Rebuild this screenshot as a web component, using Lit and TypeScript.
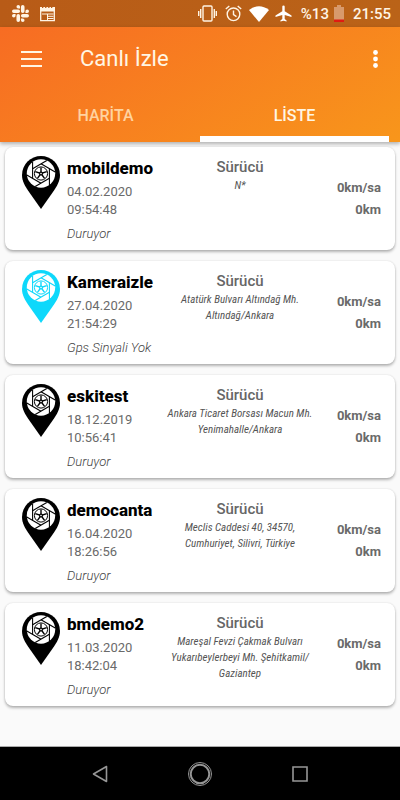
import { LitElement, html, css, svg } from "lit";
import { customElement, property, state } from "lit/decorators.js";
import { classMap } from "lit/directives/class-map.js";

interface Vehicle {
  name: string;
  date: string;
  time: string;
  status: string;
  address: string;
  speed: string;
  distance: string;
  online?: boolean;
}

const vehicles: Vehicle[] = [
  { name: "mobildemo", date: "04.02.2020", time: "09:54:48", status: "Duruyor", address: "N*", speed: "0km/sa", distance: "0km" },
  { name: "Kameraizle", date: "27.04.2020", time: "21:54:29", status: "Gps Sinyali Yok", address: "Atatürk Bulvarı Altındağ Mh. Altındağ/Ankara", speed: "0km/sa", distance: "0km", online: true },
  { name: "eskitest", date: "18.12.2019", time: "10:56:41", status: "Duruyor", address: "Ankara Ticaret Borsası Macun Mh. Yenimahalle/Ankara", speed: "0km/sa", distance: "0km" },
  { name: "democanta", date: "16.04.2020", time: "18:26:56", status: "Duruyor", address: "Meclis Caddesi 40, 34570, Cumhuriyet, Silivri, Türkiye", speed: "0km/sa", distance: "0km" },
  { name: "bmdemo2", date: "11.03.2020", time: "18:42:04", status: "Duruyor", address: "Mareşal Fevzi Çakmak Bulvarı Yukarıbeylerbeyi Mh. Şehitkamil/ Gaziantep", speed: "0km/sa", distance: "0km" },
];

const quarters = [0, 90, 180, 270];
const sixths = [0, 60, 120, 180, 240, 300];
const fifths = [0, 72, 144, 216, 288];

@customElement("status-bar")
class StatusBar extends LitElement {
  static styles = css`
    :host { display: flex; align-items: center; height: 27px; padding: 0 9px 0 12px; color: #fff4e4;
      background: linear-gradient(100deg, #b85b17, #ba6318); font: 500 15px/20px Roboto, sans-serif; }
    svg { display: block; flex: none; }
    .news { margin-left: 10px; }
    .right { display: flex; align-items: center; margin-left: auto; }
    .clock { margin-left: 8px; }
    .wifi { margin-left: 7px; }
    .plane { margin-left: 6px; }
    .percent { margin-left: 9px; }
    .battery { margin-left: 5px; }
    .time { margin-left: 9px; }
  `;
  render() {
    return html`
      <svg width="17" height="17" viewBox="0 0 24 24" fill="currentColor" aria-hidden="true">
        ${quarters.map(a => svg`<path transform="rotate(${a} 12 12)" d="M5.042 15.165a2.528 2.528 0 0 1-2.520 2.523A2.528 2.528 0 0 1 0 15.165a2.527 2.527 0 0 1 2.522-2.520h2.520zM6.313 15.165a2.527 2.527 0 0 1 2.521-2.520 2.527 2.527 0 0 1 2.521 2.520v6.313A2.528 2.528 0 0 1 8.834 24a2.528 2.528 0 0 1-2.521-2.522z"/>`)}
      </svg>
      <svg class="news" width="17" height="16" viewBox="0 0 17 16" aria-hidden="true">
        <path d="M1.700 3v11.600h13.600V3" fill="none" stroke="currentColor" stroke-width="1.300"/>
        <path d="M1 1h2v1h1.300V1h1.800v1h1.300V1h1.800v1h1.300V1H12v1h1.300V1H16v4.600H1z" fill="currentColor"/>
        <path d="M3 8h11.500M9 10.300h5.500M9 12.500h5.500M8.500 8v6" fill="none" stroke="currentColor" stroke-width="1"/>
      </svg>
      <div class="right">
        <svg width="19" height="17" viewBox="0 0 19 17" fill="none" stroke="currentColor" stroke-width="1.400" aria-hidden="true">
          <rect x="5" y="1" width="9" height="15" rx="1"/><path d="M2.700 4v9M16.300 4v9M.7 6v5M18.300 6v5"/>
        </svg>
        <svg class="clock" width="17" height="17" viewBox="0 0 17 17" fill="none" stroke="currentColor" stroke-width="1.400" aria-hidden="true">
          <circle cx="8.500" cy="9.300" r="6.300"/><path d="M8.500 5.500v4.200l3 2M.8 4l3.500-3M16.200 4l-3.500-3"/>
        </svg>
        <svg class="wifi" width="20" height="16" viewBox="0 0 20 16" fill="#fff" aria-hidden="true"><path d="M0 4Q10-3.500 20 4L10 16Z"/></svg>
        <svg class="plane" width="17" height="17" viewBox="0 0 17 17" fill="#fff" aria-hidden="true">
          <path d="M7.300 1.600a1.200 1.200 0 0 1 2.400 0v4.600l6.800 4.200v1.700l-6.800-2v3.900l1.900 1.400v1.200l-3.100-.9-3.100.9v-1.200L7.300 14v-3.900l-6.800 2v-1.700l6.800-4.200z"/>
        </svg>
        <span class="percent">%13</span>
        <svg class="battery" width="10" height="17" viewBox="0 0 10 17" aria-hidden="true">
          <path d="M3 0h4v2h3v15H0V2h3z" fill="#d89a6c"/><path d="M0 14.500h10V17H0z" fill="#e01b12"/>
        </svg>
        <span class="time">21:55</span>
      </div>`;
  }
}

@customElement("vehicle-pin")
class VehiclePin extends LitElement {
  @property({ type: Boolean, reflect: true }) online = false;
  static styles = css`
    :host { display: block; color: #000; }
    :host([online]) { color: #0ed8fb; }
    svg { display: block; }
  `;
  render() {
    return html`<svg width="38" height="53" viewBox="0 0 38 53" aria-hidden="true">
      <path d="M19 0A19 19 0 0 0 0 19C0 25 3 30 6 34.500L19 53 32 34.500C35 30 38 25 38 19A19 19 0 0 0 19 0Z" fill="currentColor"/>
      <circle cx="19" cy="17.500" r="14.200" fill="#fff"/>
      <g fill="none" stroke="currentColor">
        ${sixths.map(a => svg`<path d="M19 7.800L33.200 16" stroke-width="1.100" transform="rotate(${a} 19 17.500)"/>`)}
        <circle cx="19" cy="17.500" r="6.600" stroke-width="1"/>
        ${fifths.map(a => svg`<path d="M19 17.500V11.500" stroke-width="1.400" transform="rotate(${a} 19 17.500)"/>`)}
      </g>
      <circle cx="19" cy="17.500" r="2" fill="currentColor"/>
      <circle cx="19" cy="17.500" r=".8" fill="#fff"/>
    </svg>`;
  }
}

@customElement("vehicle-card")
class VehicleCard extends LitElement {
  @property({ attribute: false }) vehicle!: Vehicle;
  static styles = css`
    :host { display: block; }
    .card { box-sizing: border-box; min-height: 103px; padding: 9px 14px 7px 17px; border-radius: 8px; background: #fff;
      box-shadow: 0 2px 3px rgba(0, 0, 0, .28), 0 0 2px rgba(0, 0, 0, .12);
      display: grid; grid-template-columns: 38px 90px 152px 1fr; column-gap: 7px; font-family: Roboto, sans-serif; color: #6a6a6a; }
    h2, p { margin: 0; }
    .info { white-space: nowrap; }
    .name { color: #000; font-size: 17px; line-height: 24px; font-weight: 800; }
    .date { margin-top: 3px; font-size: 13px; line-height: 18px; }
    .status { margin-top: 6px; font-size: 13px; line-height: 18px; font-style: italic; font-weight: 300; color: #444; }
    .driver { text-align: center; }
    .role { font-size: 15px; line-height: 22px; font-weight: 500; color: #666; }
    .address { font: italic 400 11px/16px "Roboto Condensed", Roboto, sans-serif; color: #555; }
    .figures { padding-top: 21px; text-align: right; font-size: 13px; line-height: 22px; font-weight: 700; white-space: nowrap; }
  `;
  render() {
    const v = this.vehicle;
    return html`<article class="card">
      <vehicle-pin ?online=${v.online}></vehicle-pin>
      <div class="info">
        <h2 class="name">${v.name}</h2>
        <p class="date">${v.date}<br>${v.time}</p>
        <p class="status">${v.status}</p>
      </div>
      <div class="driver">
        <p class="role">Sürücü</p>
        <p class="address">${v.address}</p>
      </div>
      <div class="figures"><p>${v.speed}</p><p>${v.distance}</p></div>
    </article>`;
  }
}

@customElement("app-root")
class AppRoot extends LitElement {
  @state() tab = 1;
  static styles = css`
    :host { display: flex; flex-direction: column; min-height: 100vh; background: #fafafa; font-family: Roboto, sans-serif; }
    button { border: 0; padding: 0; background: none; font: inherit; color: inherit; cursor: pointer; }
    svg { display: block; }
    header { color: #fff6e4; background: linear-gradient(150deg, #f76c23, #f8961b); box-shadow: 0 2px 4px rgba(0, 0, 0, .3); }
    .toolbar { display: flex; align-items: center; height: 63px; padding: 0 16px; }
    .title { flex: 1; margin: 0 0 0 33px; font-size: 22px; line-height: 32px; font-weight: 400; }
    .icon { display: grid; place-items: center; width: 31px; height: 40px; }
    .more { width: 17px; }
    .tabs { display: flex; padding: 0 11px; }
    .tab { flex: 1; height: 52px; padding-top: 6px; box-sizing: border-box; border-bottom: 6px solid transparent;
      font-size: 16px; line-height: 20px; font-weight: 500; color: #ffd3a0; }
    .tab.active { color: #fff6e4; border-bottom-color: #fff; }
    .list { flex: 1; display: flex; flex-direction: column; gap: 11px; list-style: none; margin: 0; padding: 5px 5px 11px; }
    .nav { display: flex; justify-content: center; gap: 60px; align-items: center; height: 53px; background: #000;
      box-shadow: 0 -1px 0 #aaa; }
    .nav button { display: grid; place-items: center; width: 40px; height: 40px; }
  `;
  render() {
    return html`
      <status-bar></status-bar>
      <header>
        <div class="toolbar">
          <button class="icon" aria-label="Menü"><svg width="21" height="16" viewBox="0 0 21 16" fill="currentColor"><path d="M0 0h21v2H0zM0 7h21v2H0zM0 14h21v2H0z"/></svg></button>
          <h1 class="title">Canlı İzle</h1>
          <button class="icon more" aria-label="Diğer"><svg width="5" height="18" viewBox="0 0 5 18" fill="#fff"><circle cx="2.500" cy="2.500" r="2.400"/><circle cx="2.500" cy="9" r="2.400"/><circle cx="2.500" cy="15.500" r="2.400"/></svg></button>
        </div>
        <div class="tabs" role="tablist">
          ${["HARİTA", "LİSTE"].map((t, i) => html`<button role="tab" aria-selected=${this.tab === i}
            class=${classMap({ tab: true, active: this.tab === i })} @click=${() => (this.tab = i)}>${t}</button>`)}
        </div>
      </header>
      <ul class="list">
        ${vehicles.map(v => html`<li><vehicle-card .vehicle=${v}></vehicle-card></li>`)}
      </ul>
      <nav class="nav">
        <button aria-label="Geri"><svg width="16" height="18" viewBox="0 0 16 18" fill="none" stroke="#969696" stroke-width="1.600" stroke-linejoin="round"><path d="M14.500 1.500v15L1.500 9z"/></svg></button>
        <button aria-label="Ana ekran"><svg width="26" height="26" viewBox="0 0 26 26" fill="none" stroke="#969696"><circle cx="13" cy="13" r="11.500"/><circle cx="13" cy="13" r="9.300" stroke-width="2"/></svg></button>
        <button aria-label="Son uygulamalar"><svg width="16" height="16" viewBox="0 0 16 16" fill="none" stroke="#969696" stroke-width="1.600"><path d="M1 1h14v14H1z"/></svg></button>
      </nav>`;
  }
}
